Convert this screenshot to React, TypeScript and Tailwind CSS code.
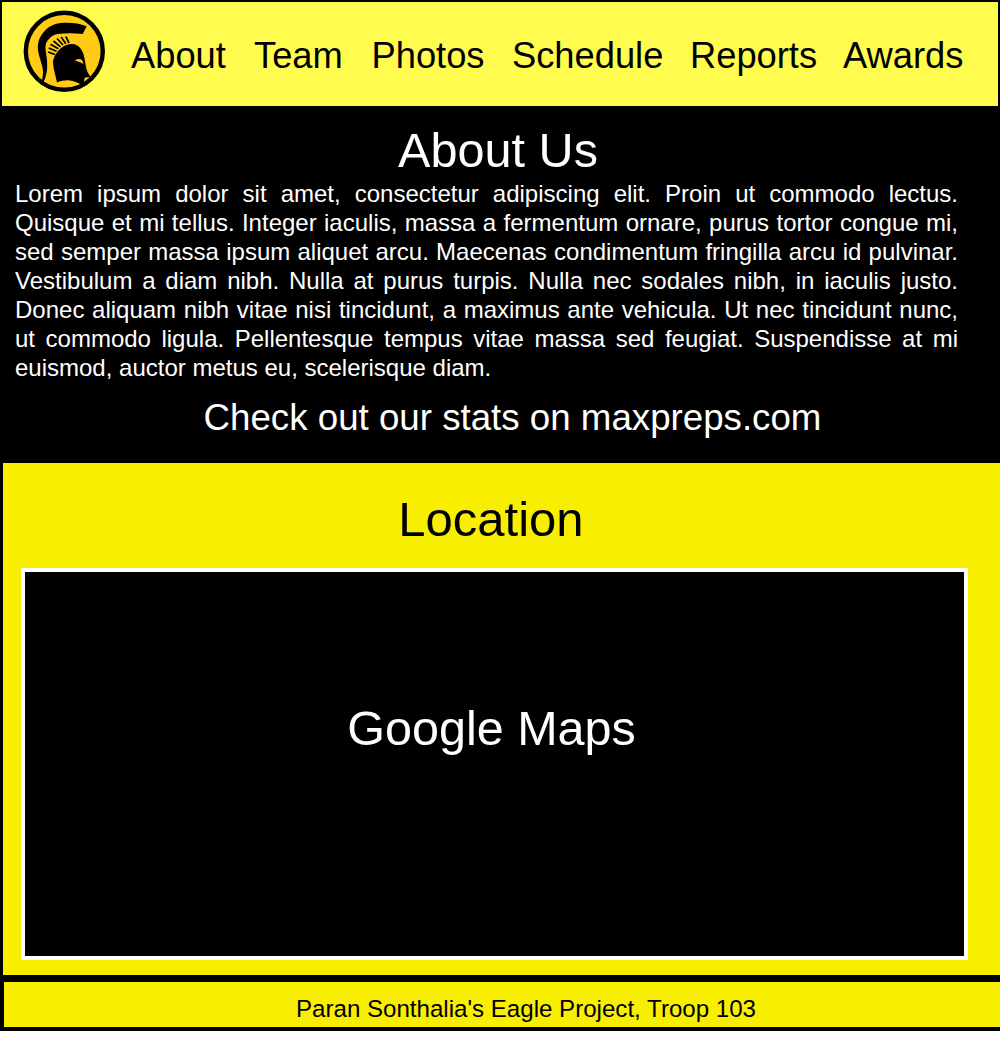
const F = "[font-family:'Liberation_Sans',Arial,sans-serif]";
function Logo() {
  return (
    <svg width="88" height="88" viewBox="0 0 88 88" className="shrink-0 mb-[4px]">
      <circle cx="44.3" cy="43.3" r="38.5" fill="#ffcb14" stroke="#000" strokeWidth="4.4" />
      <path d="M66.7 18.3 C60 15.5 52 14.5 44 14.8 C35 15.2 28 18 23 25 C18 31 17 38 18.5 45 C20 52 23 58 23 64 C23 69 22 73 20.7 77 C24 75 26 69 27 62 C27.5 56 27 50 26 45 C25 39 25.5 35 28 32 C31 28 35 26 38 26 C46 25 54 25 62.7 26 Z" fill="#000" />
      <path d="M33 53 C36 42 44 36 52 36 C60 36 64 44 65 53 C66 60 67 65 71 69 L65 69.5 L64 72 L65 78.5 C60 76 55 73 50 72.5 C45 72 41 73 37 74.5 L35 66 C34 62 33 58 33 53 Z" fill="#000" />
      <path d="M55 52.5 C57 50.5 60 50.5 62 52 C62.5 53 63 54.5 63.5 56 C61 54.5 58 53.5 55 52.5 Z" fill="#ffcb14" />
      <path d="M28 44 L35 46.5 M28.8 40 L36.5 43.2 M30.5 36.2 L38.3 40.8 M33.5 33 L40.5 38.8 M37 30.5 L43 37 M41.2 29 L45.8 35.8 M45.8 28.5 L49 35" stroke="#000" strokeWidth="1.7" fill="none" />
    </svg>
  );
}
export default function App() {
  return (
    <div className={`${F} w-[1000px] h-[1040px] bg-white text-black flex flex-col`}>
      <header className="h-[108px] shrink-0 bg-[#fffb4f] border-2 border-black flex items-center pl-[18px]">
        <Logo />
        <nav className="flex text-[36.3px] ml-[23px] leading-none pt-[5px]">
          <span className="w-[123px]">About</span>
          <span className="w-[117.5px]">Team</span>
          <span className="w-[140.5px]">Photos</span>
          <span className="w-[178px]">Schedule</span>
          <span className="w-[153px]">Reports</span>
          <span>Awards</span>
        </nav>
      </header>
      <section className="h-[355px] shrink-0 bg-black text-white">
        <h1 className="text-[48.6px] leading-[56px] text-center mt-[14px] ml-[-4px]">About Us</h1>
        <p className="text-[24px] leading-[29px] text-justify ml-[15px] w-[943px] mt-[1px]">
          Lorem ipsum dolor sit amet, consectetur adipiscing elit. Proin ut commodo lectus. Quisque et mi tellus. Integer iaculis, massa a fermentum ornare, purus tortor congue mi, sed semper massa ipsum aliquet arcu. Maecenas condimentum fringilla arcu id pulvinar. Vestibulum a diam nibh. Nulla at purus turpis. Nulla nec sodales nibh, in iaculis justo. Donec aliquam nibh vitae nisi tincidunt, a maximus ante vehicula. Ut nec tincidunt nunc, ut commodo ligula. Pellentesque tempus vitae massa sed feugiat. Suspendisse at mi euismod, auctor metus eu, scelerisque diam.
        </p>
        <p className="text-[36.7px] leading-[42px] text-center mt-[15px] ml-[25px]">Check out our stats on maxpreps.com</p>
      </section>
      <section className="h-[512px] shrink-0 bg-[#f8ee00] border-l-[3px] border-black pt-[28px]">
        <h2 className="text-[49px] leading-[56px] text-center w-[976px]">Location</h2>
        <div className="ml-[18px] mt-[21px] w-[947px] h-[392px] bg-black border-4 border-white flex items-center justify-center text-white text-[48.5px] pb-[71px] pr-[6px]">
          Google Maps
        </div>
      </section>
      <footer className="h-[56px] shrink-0 bg-[#f8ee00] border-t-[7px] border-l-4 border-b-4 border-black text-[24.1px] leading-[28px] text-center pt-[13px] pl-[48px]">
        Paran Sonthalia's Eagle Project, Troop 103
      </footer>
    </div>
  );
}
